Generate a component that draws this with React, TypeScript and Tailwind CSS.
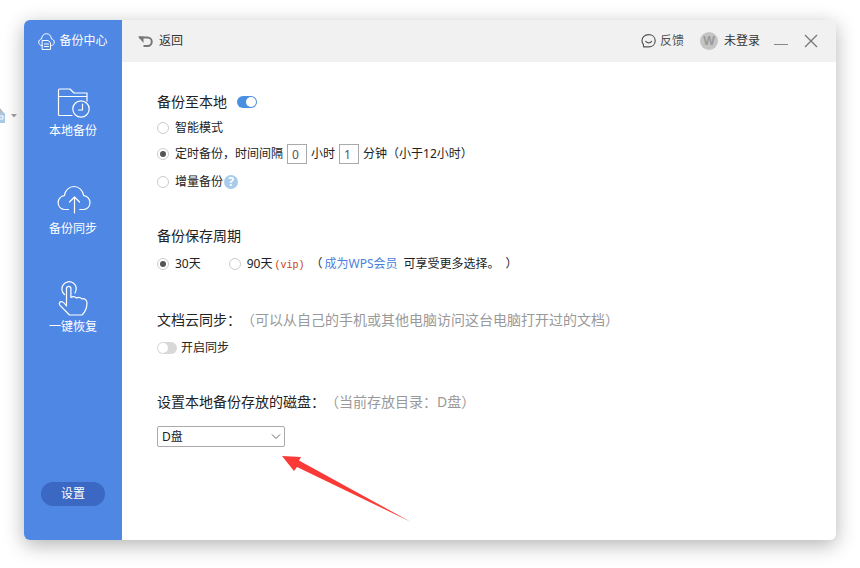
import { useState } from "react";
import type { ReactNode } from "react";

const iconProps = {
  fill: "none",
  stroke: "currentColor",
  strokeLinecap: "round" as const,
  strokeLinejoin: "round" as const
};

function BrandIcon() {
  return (
    <svg viewBox="0 0 17 17" className="size-[17px]" {...iconProps}>
      <path d="M4.5 12.5H3.6C1.8 12.2.7 10.8.7 9.2c0-1.7 1.2-3 2.8-3.2C3.7 3 5.7.7 8.500.7s4.800 2.300 5 5.300c1.600.200 2.800 1.500 2.800 3.200 0 1.600-1.100 3-2.900 3.300h-.9" />
      <path d="M4.500 7.500h5.500l2.500 2v7h-8zM6.500 11h4M6.500 13.500h4" />
    </svg>
  );
}

function FolderClockIcon() {
  return (
    <svg viewBox="0 0 36 36" className="size-9" strokeWidth="1.2" {...iconProps}>
      <path d="M17 31.500H4.500a1 1 0 0 1-1-1V6a1 1 0 0 1 1-1h10.500l4 4h13v8M3.500 12.500h28.500" />
      <circle cx="26" cy="25" r="8.200" />
      <path d="M27.500 20v6h-4" />
    </svg>
  );
}

function CloudUploadIcon() {
  return (
    <svg viewBox="0 0 36 36" className="size-9" strokeWidth="1.2" {...iconProps}>
      <path d="M13.500 27.500H9.500c-3.800-.4-6.400-3.300-6.400-6.900 0-3.800 2.800-6.700 6.200-7C10.200 8.400 14 4.500 19 4.500s8.800 3.900 9.700 9.100c3.500.3 6.300 3.200 6.300 7 0 3.600-2.600 6.500-6.400 6.900h-3.900" />
      <path d="M19.500 31V15M14.500 20l5-5 5 5" />
    </svg>
  );
}

function TouchIcon() {
  return (
    <svg viewBox="0 0 36 36" className="size-9" strokeWidth="1.2" {...iconProps}>
      <path d="M9.500 14.500A7.200 7.200 0 1 1 20 13" />
      <path d="M11.500 26V8.500a2.200 2.200 0 0 1 4.400 0v9c2-1.200 4.200-1 5.600.5 2-1 4-.6 5.300.9 2.600-.8 5.200.8 5.200 3.900 0 5.200-1.700 9.200-5 12.200H14.500L4.800 25.200c-1.300-2 .1-4.200 2.300-3.400 1.500.6 2.800 1.900 4.400 4.200" />
    </svg>
  );
}

function ReturnIcon() {
  return (
    <svg viewBox="0 0 15 13" className="h-[13px] w-[15px] text-[#777]" fill="none" stroke="currentColor" strokeWidth="2">
      <path d="M1 2.500h8.500a4.200 4.200 0 0 1 0 8.500H5.500" />
      <path d="M0 1.500h5.500V8z" fill="currentColor" stroke="none" />
    </svg>
  );
}

function FeedbackIcon() {
  return (
    <svg viewBox="0 0 15 14" className="h-3.5 w-[15px]" strokeWidth="1.2" {...iconProps}>
      <path d="M2.600 12.800h5.200c3.700 0 6.400-2.500 6.400-6.100S11.500.7 7.600.7 1 3.200 1 6.700c0 1.500.5 2.700 1.400 3.700z" />
      <path d="M4.800 7.400c1.500 1.900 4.300 1.900 5.800 0" />
    </svg>
  );
}

const navItems = [
  { label: "本地备份", icon: <FolderClockIcon /> },
  { label: "备份同步", icon: <CloudUploadIcon /> },
  { label: "一键恢复", icon: <TouchIcon /> }
];

type RadioProps = {
  name: string;
  checked: boolean;
  onChange: () => void;
  children: ReactNode;
};

function Radio({ name, checked, onChange, children }: RadioProps) {
  return (
    <label className="flex items-center gap-1.5">
      <input
        type="radio"
        name={name}
        checked={checked}
        onChange={onChange}
        className="grid size-3 shrink-0 appearance-none place-items-center rounded-full border border-[#ccc] bg-white before:size-1.5 before:rounded-full checked:before:bg-[#555]"
      />
      <span>{children}</span>
    </label>
  );
}

type SwitchProps = {
  label: string;
  checked: boolean;
  onChange: (checked: boolean) => void;
};

function Switch({ label, checked, onChange }: SwitchProps) {
  return (
    <input
      type="checkbox"
      role="switch"
      aria-label={label}
      checked={checked}
      onChange={(event) => onChange(event.target.checked)}
      className="flex h-3 w-5 shrink-0 appearance-none items-center rounded-full bg-[#d8d8d8] p-px before:size-2.5 before:rounded-full before:bg-white checked:justify-end checked:bg-[#4a90e2]"
    />
  );
}

function TimeInput({ label, initial }: { label: string; initial: string }) {
  return (
    <input
      type="text"
      aria-label={label}
      defaultValue={initial}
      className="size-5 border border-[#aaa] bg-white px-1 text-[#555]"
    />
  );
}

export default function App() {
  const [localBackup, setLocalBackup] = useState(true);
  const [cloudSync, setCloudSync] = useState(false);
  const [mode, setMode] = useState("timed");
  const [period, setPeriod] = useState("30");

  return (
    <div className="relative flex min-h-screen bg-white px-6 pt-5 pb-7 font-['Noto_Sans','Noto_Sans_CJK_SC',sans-serif] text-xs text-[#222] [text-spacing-trim:space-all]">
      <div className="absolute top-[108px] left-0 flex items-center gap-1.5" aria-hidden="true">
        <svg viewBox="0 0 5 15" className="h-[15px] w-[5px]">
          <path d="M0 0l4 5H0z" fill="#b5bcc5" />
          <path d="M0 5h5v10H0z" fill="#a9c8e8" />
          <path d="M0 8h3v3H0" fill="none" stroke="#fff" />
        </svg>
        <svg viewBox="0 0 6 4" className="h-1 w-1.5">
          <path d="M0 0h6L3 3.500z" fill="#999" />
        </svg>
      </div>

      <div className="flex flex-1 overflow-hidden rounded-md bg-white shadow-[0_5px_20px_rgba(0,0,0,0.3)]">
        <aside className="flex w-[98px] shrink-0 flex-col items-center bg-[#4f87e5] text-white">
          <div className="flex h-[42px] items-center gap-1">
            <BrandIcon />
            <h1>备份中心</h1>
          </div>
          <nav className="flex flex-col gap-[42px] pt-[22px]">
            {navItems.map((item) => (
              <button key={item.label} type="button" className="flex flex-col items-center gap-0.5 leading-[18px]">
                {item.icon}
                {item.label}
              </button>
            ))}
          </nav>
          <button type="button" className="mt-auto mb-[34px] h-6 w-16 rounded-full bg-[#3a68c3]">
            设置
          </button>
        </aside>

        <div className="flex min-w-0 flex-1 flex-col">
          <header className="flex h-[42px] items-center bg-[#f1f1f1] pr-[18px] pl-4 text-[#333]">
            <button type="button" className="flex items-center gap-1.5">
              <ReturnIcon />
              返回
            </button>
            <button type="button" className="ml-auto flex items-center gap-1 text-[#555]">
              <FeedbackIcon />
              反馈
            </button>
            <button type="button" className="ml-4 flex items-center gap-1.5">
              <span className="grid size-[18px] place-items-center rounded-full bg-[#c4c4c4] font-bold text-[#999]">W</span>
              未登录
            </button>
            <button type="button" aria-label="最小化" className="ml-3.5">
              <svg viewBox="0 0 14 14" className="size-3.5" stroke="#888">
                <path d="M0 10.500h14" />
              </svg>
            </button>
            <button type="button" aria-label="关闭" className="ml-4">
              <svg viewBox="0 0 14 14" className="size-3.5" stroke="#777" strokeWidth="1.3">
                <path d="M1 1l12 12M13 1L1 13" />
              </svg>
            </button>
          </header>

          <main className="flex flex-col px-[35px] pt-[30px]">
            <section>
              <div className="flex h-5 items-center gap-2.5">
                <h2 className="text-sm">备份至本地</h2>
                <Switch label="备份至本地" checked={localBackup} onChange={setLocalBackup} />
              </div>
              <div className="mt-1 flex h-6 items-center">
                <Radio name="mode" checked={mode === "smart"} onChange={() => setMode("smart")}>
                  智能模式
                </Radio>
              </div>
              <div className="mt-0.5 flex h-6 items-center gap-1">
                <Radio name="mode" checked={mode === "timed"} onChange={() => setMode("timed")}>
                  定时备份，时间间隔
                </Radio>
                <TimeInput label="小时" initial="0" />
                <span>小时</span>
                <TimeInput label="分钟" initial="1" />
                <span>分钟（小于12小时）</span>
              </div>
              <div className="mt-1 flex h-6 items-center">
                <Radio name="mode" checked={mode === "incremental"} onChange={() => setMode("incremental")}>
                  增量备份
                </Radio>
                <button type="button" className="ml-px grid size-3.5 place-items-center rounded-full bg-[#a9cbeb] font-bold leading-3.5 text-white">
                  ?
                </button>
              </div>
            </section>

            <section className="mt-8">
              <h2 className="text-sm leading-5">备份保存周期</h2>
              <div className="mt-1.5 flex h-6 items-center">
                <Radio name="period" checked={period === "30"} onChange={() => setPeriod("30")}>
                  30天
                </Radio>
                <div className="ml-7 flex items-center">
                  <Radio name="period" checked={period === "90"} onChange={() => setPeriod("90")}>
                    90天
                    <span className="ml-0.5 font-['Liberation_Mono',monospace] text-[10px] text-[#c63c10]">(vip)</span>
                  </Radio>
                </div>
                <p className="ml-1.5 flex gap-1.5">
                  <span className="flex gap-0.5">
                    （
                    <a href="#vip" className="text-[#4a7fdb]">
                      成为WPS会员
                    </a>
                  </span>
                  <span>可享受更多选择。</span>
                  <span>）</span>
                </p>
              </div>
            </section>

            <section className="mt-[34px]">
              <h2 className="text-sm leading-5">
                文档云同步：<span className="text-[#999]">（可以从自己的手机或其他电脑访问这台电脑打开过的文档）</span>
              </h2>
              <div className="mt-1.5 flex h-6 items-center gap-1">
                <Switch label="开启同步" checked={cloudSync} onChange={setCloudSync} />
                <span>开启同步</span>
              </div>
            </section>

            <section className="mt-8">
              <h2 className="text-sm leading-5">
                设置本地备份存放的磁盘：<span className="text-[#999]">（当前存放目录：D盘）</span>
              </h2>
              <div className="relative mt-3.5 w-32">
                <select
                  aria-label="备份磁盘"
                  defaultValue="D"
                  className="block h-[21px] w-full appearance-none rounded-xs border border-[#aaa] bg-white pl-1 text-[#222]"
                >
                  <option value="C">C盘</option>
                  <option value="D">D盘</option>
                </select>
                <svg viewBox="0 0 10 6" className="pointer-events-none absolute top-2 right-1 h-1.5 w-2.5" fill="none" stroke="#666">
                  <path d="M1 .5l4 4 4-4" />
                </svg>
                <svg viewBox="0 0 130 66" className="pointer-events-none absolute top-[30px] left-[125px] h-[66px] w-[130px]" aria-hidden="true">
                  <path d="M0 0l19 1-2 3.500L129 66 15 11l-3 4z" fill="#f93a37" />
                </svg>
              </div>
            </section>
          </main>
        </div>
      </div>
    </div>
  );
}
